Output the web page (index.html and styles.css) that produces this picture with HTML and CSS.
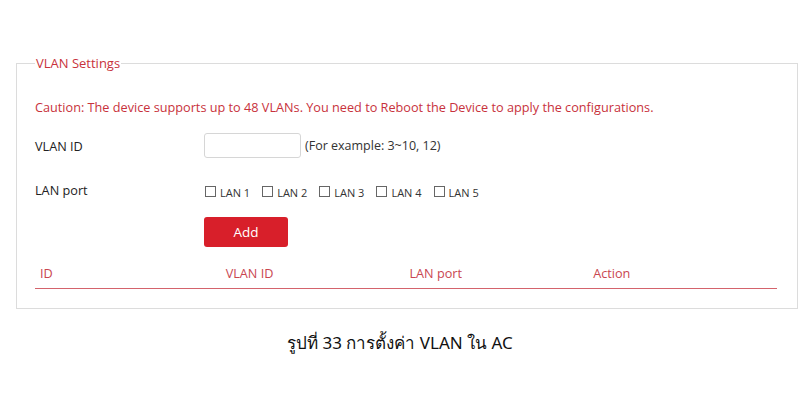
FILE: index.html
```html
<!DOCTYPE html>
<html lang="en">
<head>
    <meta charset="UTF-8">
    <meta name="viewport" content="width=device-width, initial-scale=1.0">
    <title>VLAN Settings</title>
    <link rel="stylesheet" href="styles.css">
</head>
<body>
    <fieldset class="panel">
        <legend>VLAN Settings</legend>

        <p class="caution">Caution: The device supports up to 48 VLANs. You need to Reboot the Device to apply the configurations.</p>

        <div class="row row-id">
            <label class="label">VLAN ID</label>
            <div class="field">
                <input type="text" class="text-input">
                <span class="hint">(For example: 3~10, 12)</span>
            </div>
        </div>

        <div class="row row-ports">
            <label class="label">LAN port</label>
            <div class="field ports">
                <label class="port"><span class="box"></span>LAN 1</label>
                <label class="port"><span class="box"></span>LAN 2</label>
                <label class="port"><span class="box"></span>LAN 3</label>
                <label class="port"><span class="box"></span>LAN 4</label>
                <label class="port"><span class="box"></span>LAN 5</label>
            </div>
        </div>

        <div class="row">
            <span class="label"></span>
            <button class="add-btn">Add</button>
        </div>

        <table class="vlan-table">
            <thead>
                <tr>
                    <th class="col-id">ID</th>
                    <th>VLAN ID</th>
                    <th>LAN port</th>
                    <th>Action</th>
                </tr>
            </thead>
        </table>
    </fieldset>

    <p class="caption">รูปที่ 33 การตั้งค่า VLAN ใน AC</p>
</body>
</html>
```

FILE: styles.css
```css
body {
    font-family: "Open Sans", "Noto Sans", Arial, sans-serif;
    background-color: #fff;
    color: #333;
    margin: 0;
    padding: 0;
}
.panel {
    margin: 54px 3px 0 16px;
    padding: 0 20px 19px 18px;
    border: 1px solid #dcdcdc;
}
.panel legend {
    color: #c8323c;
    font-size: 13px;
    padding: 0 1px;
    line-height: 18px;
}
.caution {
    color: #c8323c;
    font-size: 12.7px;
    margin: 26px 0 17px;
    line-height: 18px;
}
.row {
    display: flex;
    align-items: center;
}
.row-id {
    height: 25px;
    margin-bottom: 19px;
}
.row-ports {
    height: 26px;
    margin-bottom: 14px;
}
.label {
    width: 169px;
    font-size: 12.7px;
    color: #222;
}
.field {
    display: flex;
    align-items: center;
}
.text-input {
    width: 97px;
    height: 25px;
    box-sizing: border-box;
    border: 1px solid #d6d6d6;
    border-radius: 3px;
    margin: 0 4px 0 0;
}
.hint {
    font-size: 12.5px;
    color: #333;
}
.ports {
    gap: 12px;
    margin-left: 1px;
}
.port {
    display: flex;
    align-items: flex-end;
    font-size: 11px;
    color: #333;
    line-height: 11px;
    margin-top: 3px;
}
.box {
    width: 9px;
    height: 9px;
    border: 1px solid #666;
    margin-right: 4px;
    margin-bottom: 1px;
}
.add-btn {
    width: 84px;
    height: 30px;
    background-color: #d81f2a;
    color: #fff;
    border: none;
    border-radius: 3px;
    font-family: inherit;
    font-size: 13.5px;
    cursor: pointer;
}
.vlan-table {
    width: 742px;
    border-collapse: collapse;
    margin-top: 8px;
}
.vlan-table th {
    text-align: left;
    font-weight: normal;
    color: #c94650;
    font-size: 12.7px;
    line-height: 17px;
    padding: 10px 0 6px;
    border-bottom: 1px solid #d4636c;
    width: 185px;
}
.vlan-table .col-id {
    padding-left: 5px;
    width: 187px;
}
.caption {
    text-align: center;
    font-family: "Noto Sans", "DejaVu Sans", sans-serif;
    font-size: 17px;
    color: #111;
    margin: 20px 0 0;
}
```
